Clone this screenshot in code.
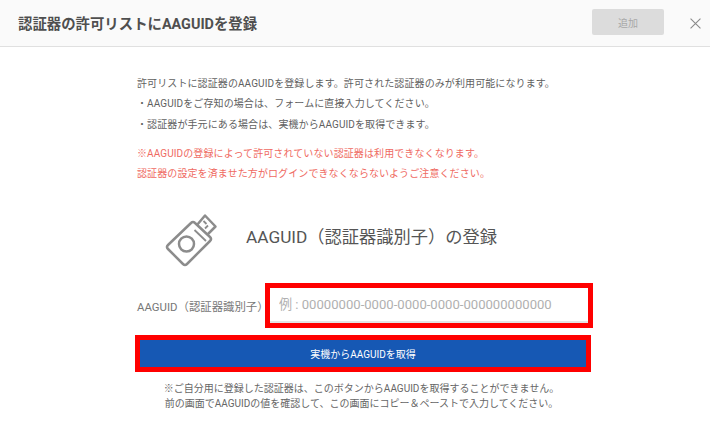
<div class="modal">
  <header class="head">
    <h1>認証器の許可リストにAAGUIDを登録</h1>
    <button class="add" disabled>追加</button>
    <button class="close" aria-label="閉じる">
      <svg width="11" height="11" viewBox="0 0 12 12"><path d="M.6.6l10.8 10.8M11.4.6L.6 11.4" stroke="#8a8a8a" stroke-width="1.2" fill="none"/></svg>
    </button>
  </header>

  <main class="body">
    <p class="line">許可リストに認証器のAAGUIDを登録します。許可された認証器のみが利用可能になります。</p>
    <p class="line">・AAGUIDをご存知の場合は、フォームに直接入力してください。</p>
    <p class="line">・認証器が手元にある場合は、実機からAAGUIDを取得できます。</p>
    <div class="warn">
      <p class="line">※AAGUIDの登録によって許可されていない認証器は利用できなくなります。</p>
      <p class="line">認証器の設定を済ませた方がログインできなくならないようご注意ください。</p>
    </div>

    <div class="title">
      <svg width="52" height="62" viewBox="10 -1 52 62" fill="none" stroke="#8c8c8c" stroke-width="2.5" stroke-linejoin="round" overflow="visible">
        <path d="M13 40 L36 18 Q38 16 40 18 L55 32 Q57 34 55 36 L32 59 Q30 61 28 59 L13 44 Q11 42 13 40 Z" />
        <circle cx="31.500" cy="39" r="7.500" />
        <path d="M42 20 L50 10.500 L60.500 21.500 L52 30" />
        <path d="M39.500 25 L51 36" stroke-width="1.800" />
        <path d="M48.500 16l3 3M53 20.500l-3 3" stroke-width="1.800" />
      </svg>
      <h2>AAGUID（認証器識別子）の登録</h2>
    </div>

    <div class="row">
      <label for="aaguid">AAGUID（認証器識別子）</label>
      <input id="aaguid" placeholder="例 : 00000000-0000-0000-0000-000000000000" />
    </div>
    <button class="fetch">実機からAAGUIDを取得</button>
    <p class="note">※ご自分用に登録した認証器は、このボタンからAAGUIDを取得することができません。<br />前の画面でAAGUIDの値を確認して、この画面にコピー＆ペーストで入力してください。</p>
  </main>
</div>

<style>
  :global(body) {
    background: #fff;
    font-family: Roboto, "Noto Sans CJK JP", sans-serif;
    color: #555;
  }

  .modal {
    width: 710px;
    height: 444px;
    overflow: hidden;
  }

  .head {
    box-sizing: border-box;
    display: flex;
    align-items: center;
    height: 47px;
    padding: 0 0 2px 18px;
    background: #fafafa;
    border-bottom: 1px solid #e0e0e0;
  }

  h1 {
    flex: 1;
    margin: 0;
    font-size: 14.400px;
    font-weight: 700;
    color: #4f4f4f;
  }

  .add {
    width: 72px;
    height: 26px;
    border: none;
    border-radius: 2px;
    background: #dcdcdc;
    color: #a8a8a8;
    font: inherit;
    font-size: 10px;
  }

  .close {
    display: flex;
    align-items: center;
    justify-content: center;
    width: 30px;
    height: 26px;
    margin: 2px 0 0 16px;
    padding: 0;
    border: none;
    background: none;
  }

  .body {
    width: 452px;
    margin-left: 137px;
    padding-top: 27px;
  }

  .line {
    margin: 0;
    font-size: 10px;
    letter-spacing: 0.1px;
    line-height: 20.400px;
    color: #5f5f5f;
  }

  .warn {
    margin-top: 8.500px;
  }

  .warn .line {
    color: #ef6a62;
  }

  .title {
    display: flex;
    align-items: center;
    gap: 29px;
    margin: 19.500px 0 0 28px;
  }

  h2 {
    margin: 0;
    font-size: 17.250px;
    font-weight: 400;
    color: #555;
  }

  .row {
    display: flex;
    align-items: center;
    margin-top: 22px;
  }

  label {
    width: 133px;
    font-size: 11.400px;
    color: #777;
    white-space: nowrap;
  }

  input {
    box-sizing: border-box;
    width: 318px;
    height: 35px;
    padding: 0 9px;
    border: none;
    border-bottom: 2px solid #e4e4e4;
    outline: 5px solid #f00;
    font: inherit;
    font-size: 13.100px;
  }

  input::placeholder {
    color: #b0b0b0;
  }

  .fetch {
    display: block;
    width: 446px;
    height: 27px;
    margin: 17px 3px 0;
    border: none;
    outline: 5px solid #f00;
    background: #1658b4;
    color: #fff;
    font: inherit;
    font-size: 10px;
  }

  .note {
    margin: 14px 3px 0 0;
    font-size: 10px;
    line-height: 15px;
    color: #666;
    text-align: center;
  }
</style>
